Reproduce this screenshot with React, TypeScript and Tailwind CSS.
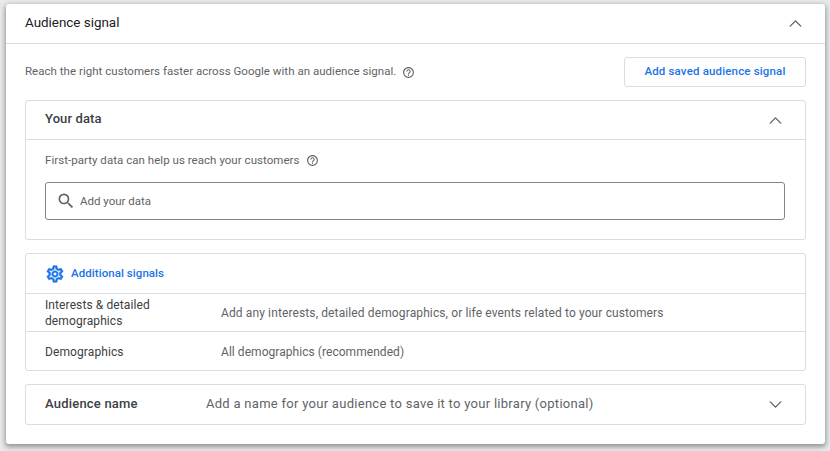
import { ChevronDown, ChevronUp } from "lucide-react";

const HelpIcon = () => (
  <svg viewBox="0 0 24 24" className="h-[13px] w-[13px] shrink-0" fill="#5f6368">
    <path d="M12 2C6.48 2 2 6.48 2 12s4.48 10 10 10 10-4.48 10-10S17.52 2 12 2zm0 18c-4.41 0-8-3.59-8-8s3.59-8 8-8 8 3.59 8 8-3.59 8-8 8zm-1-4h2v2h-2v-2zm1-10c-2.21 0-4 1.79-4 4h2c0-1.1.9-2 2-2s2 .9 2 2c0 2-3 1.75-3 5h2c0-2.25 3-2.5 3-5 0-2.21-1.79-4-4-4z" />
  </svg>
);

const SearchIcon = () => (
  <svg viewBox="0 0 24 24" className="h-[20px] w-[20px] shrink-0" fill="#5f6368">
    <path d="M15.5 14h-.79l-.28-.27A6.471 6.471 0 0 0 16 9.5 6.5 6.5 0 1 0 9.5 16c1.61 0 3.09-.59 4.23-1.57l.27.28v.79l5 4.99L20.49 19l-4.99-5zm-6 0C7.01 14 5 11.99 5 9.5S7.01 5 9.5 5 14 7.01 14 9.5 11.99 14 9.5 14z" />
  </svg>
);

const GearIcon = () => (
  <svg viewBox="0 0 24 24" className="h-[20px] w-[20px] shrink-0" fill="#1a73e8" stroke="#1a73e8" strokeWidth={0.6}>
    <path d="M19.43 12.98c.04-.32.07-.64.07-.98s-.03-.66-.07-.98l2.11-1.65c.19-.15.24-.42.12-.64l-2-3.46c-.12-.22-.39-.3-.61-.22l-2.49 1c-.52-.4-1.08-.73-1.69-.98l-.38-2.65C14.46 2.18 14.25 2 14 2h-4c-.25 0-.46.18-.49.42l-.38 2.65c-.61.25-1.17.59-1.69.98l-2.49-1c-.23-.09-.49 0-.61.22l-2 3.46c-.13.22-.07.49.12.64l2.11 1.65c-.04.32-.07.65-.07.98s.03.66.07.98l-2.11 1.65c-.19.15-.24.42-.12.64l2 3.46c.12.22.39.3.61.22l2.49-1c.52.4 1.08.73 1.69.98l.38 2.65c.03.24.24.42.49.42h4c.25 0 .46-.18.49-.42l.38-2.65c.61-.25 1.17-.59 1.69-.98l2.49 1c.23.09.49 0 .61-.22l2-3.46c.12-.22.07-.49-.12-.64l-2.11-1.65zm-1.98-1.71c.04.31.05.52.05.73 0 .21-.02.43-.05.73l-.14 1.13.89.7 1.08.84-.7 1.21-1.27-.51-1.04-.42-.9.68c-.43.32-.84.56-1.25.73l-1.06.43-.16 1.13-.2 1.35h-1.4l-.19-1.35-.16-1.13-1.06-.43c-.43-.18-.83-.41-1.23-.71l-.91-.7-1.06.43-1.27.51-.7-1.21 1.08-.84.89-.7-.14-1.13c-.03-.31-.05-.54-.05-.74s.02-.43.05-.73l.14-1.13-.89-.7-1.08-.84.7-1.21 1.27.51 1.04.42.9-.68c.43-.32.84-.56 1.25-.73l1.06-.43.16-1.13.2-1.35h1.39l.19 1.35.16 1.13 1.06.43c.43.18.83.41 1.23.71l.91.7 1.06-.43 1.27-.51.7 1.21-1.07.85-.89.7.14 1.13zM12 8c-2.21 0-4 1.79-4 4s1.79 4 4 4 4-1.79 4-4-1.79-4-4-4zm0 6c-1.1 0-2-.9-2-2s.9-2 2-2 2 .9 2 2-.9 2-2 2z" />
  </svg>
);

const App = () => {
  return (
    <div className="h-[451px] w-[830px] overflow-hidden bg-[#e9eaeb] pl-[6px] pt-[4px] font-['Roboto',sans-serif]">
      <div className="h-[440px] w-[819px] rounded-[3px] bg-white shadow-[0_2px_5px_1px_rgba(60,64,67,0.5)]">
        {/* Card header */}
        <div className="flex h-[40px] items-center justify-between border-b border-[#dadce0] pl-[19px] pr-[19px]">
          <span className="text-[13.4px] text-[#202124]">Audience signal</span>
          <ChevronUp className="h-[21px] w-[21px] text-[#5f6368]" strokeWidth={1.6} />
        </div>

        <div className="px-[19px] pt-[13px]">
          <div className="flex h-[30px] items-center justify-between">
            <div className="flex items-center gap-[6px]">
              <span className="text-[11.5px] tracking-[0.03px] text-[#5f6368]">
                Reach the right customers faster across Google with an audience signal.
              </span>
              <HelpIcon />
            </div>
            <button className="flex h-[30px] w-[182px] items-center justify-center rounded-[3px] border border-[#dadce0] text-[11.5px] font-medium tracking-[0.16px] text-[#1a73e8]">
              Add saved audience signal
            </button>
          </div>

          {/* Your data */}
          <div className="mt-[13px] h-[140px] rounded-[3px] border border-[#dadce0]">
            <div className="flex h-[39px] items-center justify-between border-b border-[#dadce0] pl-[19px] pr-[19px]">
              <span className="-translate-y-px text-[13px] font-medium tracking-[0.1px] text-[#3c4043]">Your data</span>
              <ChevronUp className="h-[21px] w-[21px] text-[#5f6368]" strokeWidth={1.6} />
            </div>
            <div className="pl-[19px] pr-[20px] pt-[12px]">
              <div className="flex items-center gap-[7px]">
                <span className="text-[11.5px] tracking-[0.04px] text-[#5f6368]">
                  First-party data can help us reach your customers
                </span>
                <HelpIcon />
              </div>
              <div className="mt-[13px] flex h-[38px] items-center gap-[4px] rounded-[3px] border border-[#80868b] pl-[10px]">
                <SearchIcon />
                <span className="text-[11.5px] text-[#5f6368]">Add your data</span>
              </div>
            </div>
          </div>

          {/* Additional signals */}
          <div className="mt-[13px] rounded-[3px] border border-[#dadce0]">
            <div className="flex h-[40px] items-center gap-[6px] border-b border-[#dadce0] pl-[19px]">
              <GearIcon />
              <span className="text-[11.5px] font-medium tracking-[0.06px] text-[#1a73e8]">Additional signals</span>
            </div>
            <div className="flex h-[38px] items-center border-b border-[#dadce0] pl-[19px]">
              <span className="w-[176px] text-[12px] leading-[16px] tracking-[0.1px] text-[#3c4043]">
                Interests &amp; detailed
                <br />
                demographics
              </span>
              <span className="text-[12px] tracking-[0.12px] text-[#5f6368]">
                Add any interests, detailed demographics, or life events related to your customers
              </span>
            </div>
            <div className="flex h-[38px] items-center pl-[19px] pt-[2px]">
              <span className="w-[176px] text-[12px] tracking-[0.1px] text-[#3c4043]">Demographics</span>
              <span className="text-[12px] tracking-[0.05px] text-[#5f6368]">All demographics (recommended)</span>
            </div>
          </div>

          {/* Audience name */}
          <div className="mt-[13px] flex h-[41px] items-center justify-between rounded-[3px] border border-[#dadce0] pl-[19px] pr-[19px]">
            <div className="flex -translate-y-px items-center">
              <span className="w-[161px] text-[13px] font-medium tracking-[0.2px] text-[#3c4043]">Audience name</span>
              <span className="text-[13px] tracking-[0.28px] text-[#5f6368]">
                Add a name for your audience to save it to your library (optional)
              </span>
            </div>
            <ChevronDown className="h-[21px] w-[21px] text-[#5f6368]" strokeWidth={1.6} />
          </div>
        </div>
      </div>
    </div>
  );
};

export default App;
